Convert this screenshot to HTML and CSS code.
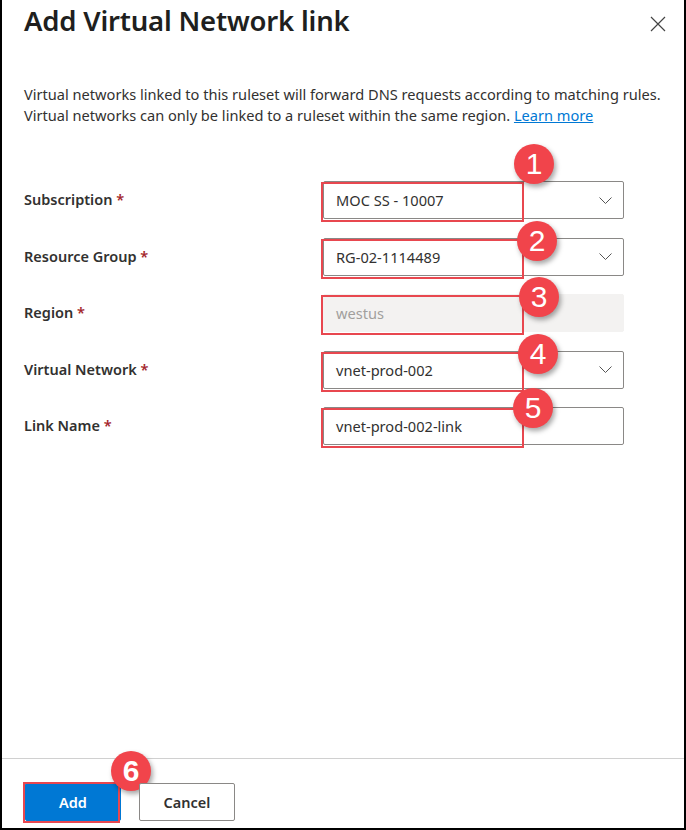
FILE: index.html
```html
<!DOCTYPE html>
<html lang="en">
<head>
<meta charset="utf-8">
<title>Add Virtual Network link</title>
<link rel="stylesheet" href="styles.css">
</head>
<body>
<div class="panel">
  <div class="header">
    <h1 class="title">Add Virtual Network link</h1>
    <button class="close" aria-label="Close">
      <svg width="16" height="16" viewBox="0 0 16 16"><path d="M1 1L15 15M15 1L1 15" stroke="#444" stroke-width="1.2" fill="none"/></svg>
    </button>
  </div>
  <div class="body">
    <p class="desc">Virtual networks linked to this ruleset will forward DNS requests according to matching rules.<br>Virtual networks can only be linked to a ruleset within the same region. <a href="#" class="link">Learn more</a></p>
    <div class="form">
      <div class="row">
        <div class="label">Subscription <span class="req">*</span></div>
        <div class="field select"><span>MOC SS - 10007</span><svg class="chev" width="13" height="7" viewBox="0 0 13 7"><path d="M0.5 0.5L6.5 6.5L12.5 0.5" stroke="#555" stroke-width="1" fill="none"/></svg>
          <div class="hl"></div><div class="badge">1</div></div>
      </div>
      <div class="row">
        <div class="label">Resource Group <span class="req">*</span></div>
        <div class="field select"><span>RG-02-1114489</span><svg class="chev" width="13" height="7" viewBox="0 0 13 7"><path d="M0.5 0.5L6.5 6.5L12.5 0.5" stroke="#555" stroke-width="1" fill="none"/></svg>
          <div class="hl"></div><div class="badge b2">2</div></div>
      </div>
      <div class="row">
        <div class="label">Region <span class="req">*</span></div>
        <div class="field disabled"><span>westus</span>
          <div class="hl"></div><div class="badge b3">3</div></div>
      </div>
      <div class="row">
        <div class="label">Virtual Network <span class="req">*</span></div>
        <div class="field select"><span>vnet-prod-002</span><svg class="chev" width="13" height="7" viewBox="0 0 13 7"><path d="M0.5 0.5L6.5 6.5L12.5 0.5" stroke="#555" stroke-width="1" fill="none"/></svg>
          <div class="hl"></div><div class="badge b4">4</div></div>
      </div>
      <div class="row">
        <div class="label">Link Name <span class="req">*</span></div>
        <div class="field"><span>vnet-prod-002-link</span>
          <div class="hl"></div><div class="badge b5">5</div></div>
      </div>
    </div>
  </div>
  <div class="footer">
    <button class="btn primary">Add<div class="hl hl-btn"></div><div class="badge b6">6</div></button>
    <button class="btn">Cancel</button>
  </div>
</div>
</body>
</html>
```

FILE: styles.css
```css
* { box-sizing: border-box; }
html, body { margin: 0; padding: 0; background: #fff; }
body { font-family: "Noto Sans", "Open Sans", sans-serif; color: #323130; }
.panel {
  width: 686px;
  height: 830px;
  border-left: 2px solid #000;
  border-right: 2px solid #000;
  border-bottom: 2px solid #000;
  display: flex;
  flex-direction: column;
}
.header {
  display: flex;
  justify-content: space-between;
  align-items: flex-start;
  padding: 0 18px 0 22px;
}
.title {
  margin: 2px 0 0 0;
  font-size: 27.5px;
  font-weight: 600;
  line-height: 38px;
  color: #201f1e;
  letter-spacing: -0.2px;
}
.close {
  background: none;
  border: none;
  padding: 0;
  margin-top: 16px;
  width: 16px;
  height: 16px;
  display: flex;
}
.body {
  flex: 1;
  padding: 0 22px;
}
.desc {
  margin: 44px 0 0 0;
  font-size: 14.6px;
  line-height: 21px;
  color: #323130;
  white-space: nowrap;
}
.link { color: #0078d4; text-decoration: underline; }
.form {
  margin-top: 55px;
  display: flex;
  flex-direction: column;
  gap: 18.5px;
}
.row {
  display: grid;
  grid-template-columns: 299px 301px;
  align-items: center;
  height: 38px;
}
.label {
  font-size: 14.5px;
  font-weight: 600;
  color: #323130;
  line-height: 20px;
  margin-top: -2px;
}
.req { color: #a4262c; }
.field {
  position: relative;
  height: 38px;
  border: 1px solid #8a8886;
  border-radius: 2px;
  display: flex;
  align-items: center;
  justify-content: space-between;
  padding: 0 11px 0 12px;
  font-size: 14.6px;
  color: #323130;
}
.field.disabled {
  background: #f3f2f1;
  border-color: #f3f2f1;
  color: #a19f9d;
}
.hl {
  position: absolute;
  left: -3px;
  top: 0;
  width: 203px;
  height: 40px;
  border: 2px solid #e8474f;
  pointer-events: none;
}
.badge {
  position: absolute;
  left: 190px;
  top: -38px;
  width: 40px;
  height: 40px;
  border-radius: 50%;
  background: #f1444b;
  color: #fff;
  font-family: "Liberation Sans", Arial, sans-serif;
  font-size: 30px;
  line-height: 40px;
  text-align: center;
  box-shadow: 2px 3px 5px rgba(0,0,0,0.35);
}
.b2 { left: 193px; top: -18px; }
.b3 { left: 195px; top: -18px; }
.b4 { left: 194px; top: -18px; }
.b5 { left: 189px; top: -20px; }
.footer {
  border-top: 1px solid #d0d0d0;
  height: 70px;
  display: flex;
  align-items: flex-start;
  gap: 18px;
  padding: 24px 0 0 23px;
}
.btn {
  position: relative;
  height: 38px;
  min-width: 96px;
  padding: 0 20px;
  border: 1px solid #8a8886;
  border-radius: 2px;
  background: #fff;
  font-family: "Noto Sans", "Open Sans", sans-serif;
  font-size: 14.5px;
  font-weight: 600;
  color: #323130;
}
.btn.primary {
  background: #0078d4;
  border-color: #0078d4;
  color: #fff;
  width: 95px;
}
.hl-btn {
  left: -3px;
  top: -2px;
  width: 97px;
  height: 41px;
}
.b6 { left: 85px; top: -33px; }
```
